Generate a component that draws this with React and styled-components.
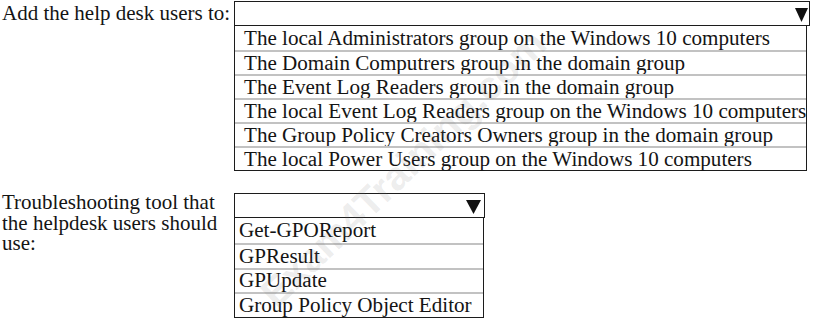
import React from "react";
import styled, { createGlobalStyle } from "styled-components";

const GlobalStyle = createGlobalStyle`
  html, body {
    margin: 0;
    padding: 0;
    background: #ffffff;
  }
  body {
    font-family: "Liberation Serif", "Times New Roman", serif;
    color: #141414;
  }
`;

const Page = styled.div`
  position: relative;
  width: 813px;
  height: 318px;
  overflow: hidden;
  display: flex;
  flex-direction: column;
  gap: 22px;
  padding-top: 1px;
  box-sizing: border-box;
`;

const Section = styled.div`
  display: grid;
  grid-template-columns: 234px auto;
  align-items: start;
`;

const Label = styled.div`
  padding-left: 2px;
  font-size: 21px;
  line-height: ${(p) => p.$lineHeight || "24px"};
  margin-top: ${(p) => p.$offset || 0}px;
  white-space: pre-line;
`;

const Dropdown = styled.div`
  display: flex;
  flex-direction: column;
`;

const Header = styled.div`
  width: ${(p) => p.$width}px;
  height: 25px;
  box-sizing: border-box;
  border: 1px solid #1c1c1c;
  display: flex;
  justify-content: flex-end;
  align-items: center;
  padding-right: ${(p) => p.$arrowGap}px;
  padding-top: 3px;
`;

const List = styled.div`
  width: ${(p) => p.$width}px;
  box-sizing: border-box;
  border: 1px solid #1c1c1c;
  border-top: none;
  display: flex;
  flex-direction: column;
`;

const Option = styled.div`
  height: ${(p) => p.$height}px;
  box-sizing: border-box;
  display: flex;
  align-items: center;
  padding-left: ${(p) => p.$indent}px;
  font-size: 21.1px;
  white-space: nowrap;
  & + & {
    border-top: 2px solid #c2c2c2;
  }
`;

const Watermark = styled.div`
  position: absolute;
  left: 208px;
  top: 146px;
  width: 390px;
  text-align: center;
  font-family: "Liberation Sans", Arial, sans-serif;
  font-weight: bold;
  font-size: 40px;
  line-height: 44px;
  color: rgba(120, 120, 120, 0.14);
  transform: rotate(-44deg);
  transform-origin: center center;
  pointer-events: none;
  white-space: nowrap;
`;

const Arrow = ({ w, h }) => (
  <svg width={w} height={h} viewBox={`0 0 ${w} ${h}`}>
    <polygon points={`0,0 ${w},0 ${w / 2},${h}`} fill="#111" />
  </svg>
);

const groups = [
  "The local Administrators group on the Windows 10 computers",
  "The Domain Computrers group in the domain group",
  "The Event Log Readers group in the domain group",
  "The local Event Log Readers group on the Windows 10 computers",
  "The Group Policy Creators Owners group in the domain group",
  "The local Power Users group on the Windows 10 computers",
];

const tools = ["Get-GPOReport", "GPResult", "GPUpdate", "Group Policy Object Editor"];

export default function App() {
  return (
    <>
      <GlobalStyle />
      <Page>
        <Section>
          <Label>Add the help desk users to:</Label>
          <Dropdown>
            <Header $width={576} $arrowGap={1}>
              <Arrow w={13} h={14} />
            </Header>
            <List $width={573}>
              {groups.map((g) => (
                <Option key={g} $height={24} $indent={9}>
                  {g}
                </Option>
              ))}
            </List>
          </Dropdown>
        </Section>
        <Section>
          <Label $lineHeight="20.5px" $offset={-1}>
            {"Troubleshooting tool that\nthe helpdesk users should\nuse:"}
          </Label>
          <Dropdown>
            <Header $width={251} $arrowGap={3}>
              <Arrow w={15} h={14} />
            </Header>
            <List $width={250}>
              {tools.map((t) => (
                <Option key={t} $height={24.75} $indent={4}>
                  {t}
                </Option>
              ))}
            </List>
          </Dropdown>
        </Section>
        <Watermark>Exam4Training.com</Watermark>
      </Page>
    </>
  );
}
